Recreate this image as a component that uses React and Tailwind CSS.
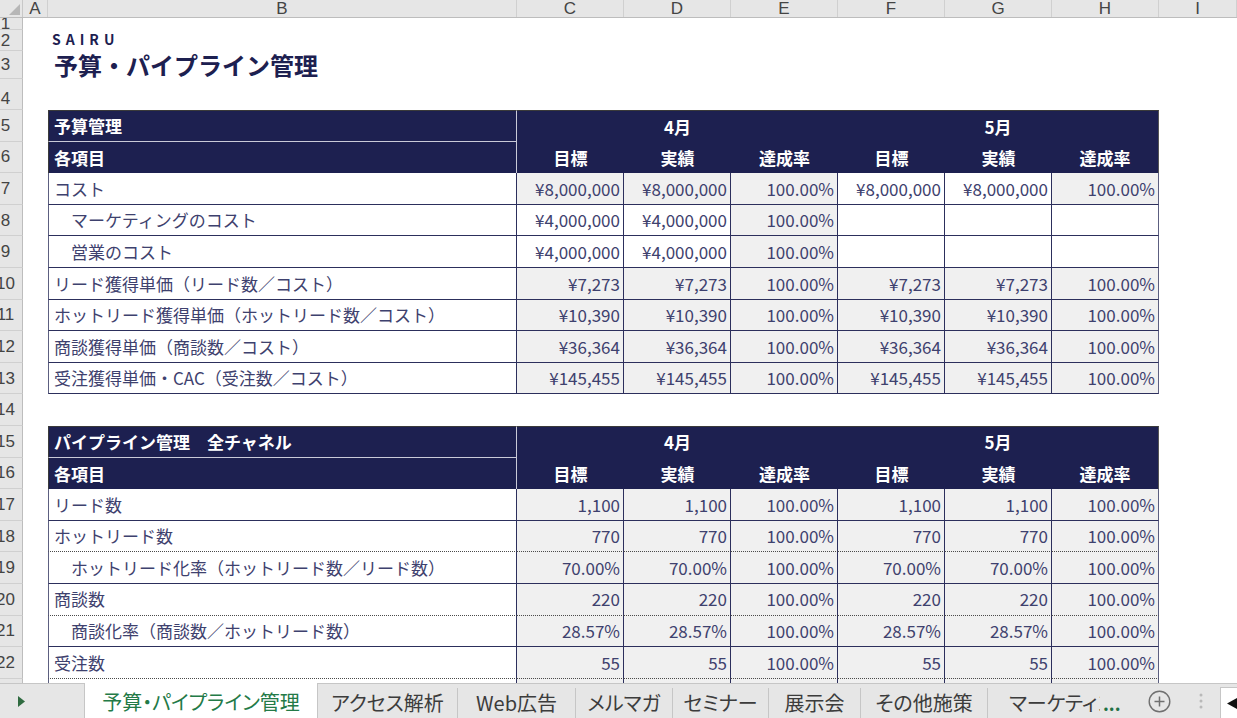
import React from "react";

const COLS = "grid grid-cols-[23px_25px_469px_107px_107px_107px_107px_107px_107px_1fr]";

const G = true;
const W = false;
const ALL = [G, G, G, G, G, G];

const budgetRows = [
  { n: 7, label: "コスト", vals: ["¥8,000,000", "¥8,000,000", "100.00%", "¥8,000,000", "¥8,000,000", "100.00%"], grey: [G, G, G, W, W, G] },
  { n: 8, label: "マーケティングのコスト", indent: true, vals: ["¥4,000,000", "¥4,000,000", "100.00%", "", "", ""], grey: [W, W, G, W, W, W] },
  { n: 9, label: "営業のコスト", indent: true, vals: ["¥4,000,000", "¥4,000,000", "100.00%", "", "", ""], grey: [W, W, G, W, W, W] },
  { n: 10, label: "リード獲得単価（リード数／コスト）", vals: ["¥7,273", "¥7,273", "100.00%", "¥7,273", "¥7,273", "100.00%"], grey: ALL },
  { n: 11, label: "ホットリード獲得単価（ホットリード数／コスト）", vals: ["¥10,390", "¥10,390", "100.00%", "¥10,390", "¥10,390", "100.00%"], grey: ALL },
  { n: 12, label: "商談獲得単価（商談数／コスト）", vals: ["¥36,364", "¥36,364", "100.00%", "¥36,364", "¥36,364", "100.00%"], grey: ALL },
  { n: 13, label: "受注獲得単価・CAC（受注数／コスト）", vals: ["¥145,455", "¥145,455", "100.00%", "¥145,455", "¥145,455", "100.00%"], grey: ALL },
];

const pipelineRows = [
  { n: 17, label: "リード数", vals: ["1,100", "1,100", "100.00%", "1,100", "1,100", "100.00%"], grey: ALL },
  { n: 18, label: "ホットリード数", vals: ["770", "770", "100.00%", "770", "770", "100.00%"], grey: ALL, dotted: true },
  { n: 19, label: "ホットリード化率（ホットリード数／リード数）", indent: true, vals: ["70.00%", "70.00%", "100.00%", "70.00%", "70.00%", "100.00%"], grey: ALL },
  { n: 20, label: "商談数", vals: ["220", "220", "100.00%", "220", "220", "100.00%"], grey: ALL, dotted: true },
  { n: 21, label: "商談化率（商談数／ホットリード数）", indent: true, vals: ["28.57%", "28.57%", "100.00%", "28.57%", "28.57%", "100.00%"], grey: ALL },
  { n: 22, label: "受注数", vals: ["55", "55", "100.00%", "55", "55", "100.00%"], grey: ALL, dotted: true },
];

function RowNum({ n, align = "items-center" }) {
  return (
    <div className={`flex ${align} overflow-hidden bg-[#e6e6e6] border-r border-b border-r-[#bdbdbd] border-b-[#d0d0d0] font-['Liberation_Sans',sans-serif] text-[17px] leading-none text-[#444]`}>
      <span className="-ml-[12px] w-[35px] shrink-0 text-center">{n}</span>
    </div>
  );
}

function BodyRow({ row }) {
  const bb = row.dotted ? "border-b-[#4a4a4a] [border-bottom-style:dotted]!" : "border-b-[#2c2f5c]";
  return (
    <div className={`${COLS} h-[31.6px]`}>
      <RowNum n={row.n} />
      <div />
      <div className={`flex items-center whitespace-nowrap overflow-hidden bg-white border-l border-r border-b border-l-[#5c5f80] border-r-[#2c2f5c] ${bb} ${row.indent ? "pl-[22px]" : "pl-[5px]"}`}>
        {row.label}
      </div>
      {row.vals.map((v, i) => (
        <div
          key={i}
          className={`flex items-center justify-end pr-[3px] whitespace-nowrap border-r border-b ${bb} ${i === 5 ? "border-r-[#5c5f80]" : "border-r-[#2c2f5c]"} ${row.grey[i] ? "bg-[#f0f0f0]" : "bg-white"}`}
        >
          {v}
        </div>
      ))}
      <div />
    </div>
  );
}

function HeaderRows({ top, title }) {
  return (
    <>
      <div className={`${COLS} h-[31.6px]`}>
        <RowNum n={top} />
        <div />
        <div className="flex items-center pl-[5px] bg-[#1d2050] text-white font-bold whitespace-nowrap border-t border-l border-r border-b border-t-[#3a3a3a] border-l-[#3a3a3a] border-r-[#c9cad8] border-b-[#c9cad8]">
          {title}
        </div>
        <div className="col-span-3 flex items-center justify-center bg-[#1d2050] text-white font-bold border-t border-t-[#3a3a3a]">4月</div>
        <div className="col-span-3 flex items-center justify-center bg-[#1d2050] text-white font-bold border-t border-r border-t-[#3a3a3a] border-r-[#555]">5月</div>
        <div />
      </div>
      <div className={`${COLS} h-[31.6px]`}>
        <RowNum n={top + 1} />
        <div />
        <div className="flex items-center pl-[5px] bg-[#1d2050] text-white font-bold border-l border-r border-l-[#3a3a3a] border-r-[#c9cad8]">各項目</div>
        {["目標", "実績", "達成率", "目標", "実績", "達成率"].map((t, i) => (
          <div key={i} className={`flex items-center justify-center bg-[#1d2050] text-white font-bold ${i === 5 ? "border-r border-r-[#555]" : ""}`}>
            {t}
          </div>
        ))}
        <div />
      </div>
    </>
  );
}

function EmptyRow({ n, h = "h-[31.6px]", align }) {
  return (
    <div className={`${COLS} ${h}`}>
      <RowNum n={n} align={align} />
    </div>
  );
}

function ColumnHeader() {
  const letters = ["A", "B", "C", "D", "E", "F", "G", "H", "I"];
  return (
    <div className={`${COLS} h-[18px] shrink-0 bg-[#e6e6e6] border-b border-[#bdbdbd] font-['Liberation_Sans',sans-serif] text-[17px] leading-none text-[#444]`}>
      <div className="relative border-r border-[#c8c8c8]">
        <svg className="absolute right-[2px] bottom-[2px]" width="11" height="11" viewBox="0 0 11 11">
          <polygon points="11,0 11,11 0,11" fill="#b7b7b7" />
        </svg>
      </div>
      {letters.map((l) => (
        <div key={l} className="flex items-center justify-center overflow-hidden border-r border-[#d0d0d0]">
          {l}
        </div>
      ))}
    </div>
  );
}

function TabBar() {
  const tabs = [
    ["アクセス解析", "w-[139px]"],
    ["Web広告", "w-[117px]"],
    ["メルマガ", "w-[96px]"],
    ["セミナー", "w-[95px]"],
    ["展示会", "w-[91px]"],
    ["その他施策", "w-[126px]"],
  ];
  return (
    <div className="h-[35px] shrink-0 flex bg-[#e6e6e6] text-[20px] leading-none [font-feature-settings:'palt'] text-[#3c3c3c]">
      <div className="w-[85px] flex items-center pl-[18px] border-t border-r border-[#c6c6c6]">
        <svg width="7" height="11" viewBox="0 0 7 11">
          <polygon points="0,0 7,5.5 0,11" fill="#2f6b40" />
        </svg>
      </div>
      <div className="w-[233px] flex items-center justify-center pt-[3px] bg-white border-r border-[#c6c6c6] text-[#237a47]">
        予算・パイプライン管理
      </div>
      <div className="flex-1 flex border-t border-[#c6c6c6]">
        {tabs.map(([t, w]) => (
          <React.Fragment key={t}>
            <div className={`${w} flex items-center justify-center pt-[3px] whitespace-nowrap`}>{t}</div>
            <div className="w-px mt-[4px] bg-[#c6c6c6]" />
          </React.Fragment>
        ))}
        <div className="w-[112px] flex items-center pl-[21px] pt-[3px] overflow-hidden whitespace-nowrap">マーケティング</div>
        <div className="w-[30px] flex items-end pb-[6px] pl-[3px] text-[18px] font-bold text-[#1e7145]">...</div>
        <div className="w-[50px] flex items-center justify-center pl-[8px]">
          <svg width="23" height="23" viewBox="0 0 23 23">
            <circle cx="11.5" cy="11.5" r="10.3" fill="none" stroke="#707070" strokeWidth="1.4" />
            <path d="M11.5 6.5v10M6.5 11.5h10" stroke="#707070" strokeWidth="1.5" />
          </svg>
        </div>
        <div className="w-[40px] flex items-center justify-center pl-[2px]">
          <svg width="4" height="16" viewBox="0 0 4 16">
            <circle cx="2" cy="2" r="1.5" fill="#b9b9b9" />
            <circle cx="2" cy="8" r="1.5" fill="#b9b9b9" />
            <circle cx="2" cy="14" r="1.5" fill="#b9b9b9" />
          </svg>
        </div>
        <div className="flex-1 flex items-center pl-[6px] mt-[3px] bg-white border-l border-t border-[#c6c6c6]">
          <svg width="10" height="11" viewBox="0 0 10 11">
            <polygon points="10,0 10,11 0,5.5" fill="#111" />
          </svg>
        </div>
      </div>
    </div>
  );
}

export default function App() {
  return (
    <div className="w-[1237px] h-[718px] overflow-hidden flex flex-col bg-white font-['Noto_Sans_CJK_JP',sans-serif] text-[17px] text-[#3e416e]">
      <ColumnHeader />

      <div className="flex-1 overflow-hidden">
        {/* title block */}
        <div className={`${COLS} h-[12px]`}>
          <RowNum n={1} align="items-start -mt-[3px]" />
        </div>
        <div className={`${COLS} h-[21px]`}>
          <RowNum n={2} align="items-start pt-[2px]" />
          <div />
          <div className="pl-[4px] pt-[2px] text-[14px] leading-none font-bold tracking-[5px] text-[#1d2050]">SAIRU</div>
        </div>
        <div className={`${COLS} h-[28px]`}>
          <RowNum n={3} />
          <div />
          <div className="pl-[6px] pt-[2px] text-[24px] leading-none font-bold text-[#1d2050] whitespace-nowrap">予算・パイプライン管理</div>
        </div>
        <EmptyRow n={4} h="h-[31px]" align="items-end pb-[2px]" />

        {/* budget table */}
        <HeaderRows top={5} title="予算管理" />
        {budgetRows.map((r) => (
          <BodyRow key={r.n} row={r} />
        ))}

        <EmptyRow n={14} />

        {/* pipeline table */}
        <HeaderRows top={15} title="パイプライン管理　全チャネル" />
        {pipelineRows.map((r) => (
          <BodyRow key={r.n} row={r} />
        ))}
        <BodyRow row={{ n: 23, label: "", vals: ["", "", "", "", "", ""], grey: ALL }} />
      </div>

      <TabBar />
    </div>
  );
}
